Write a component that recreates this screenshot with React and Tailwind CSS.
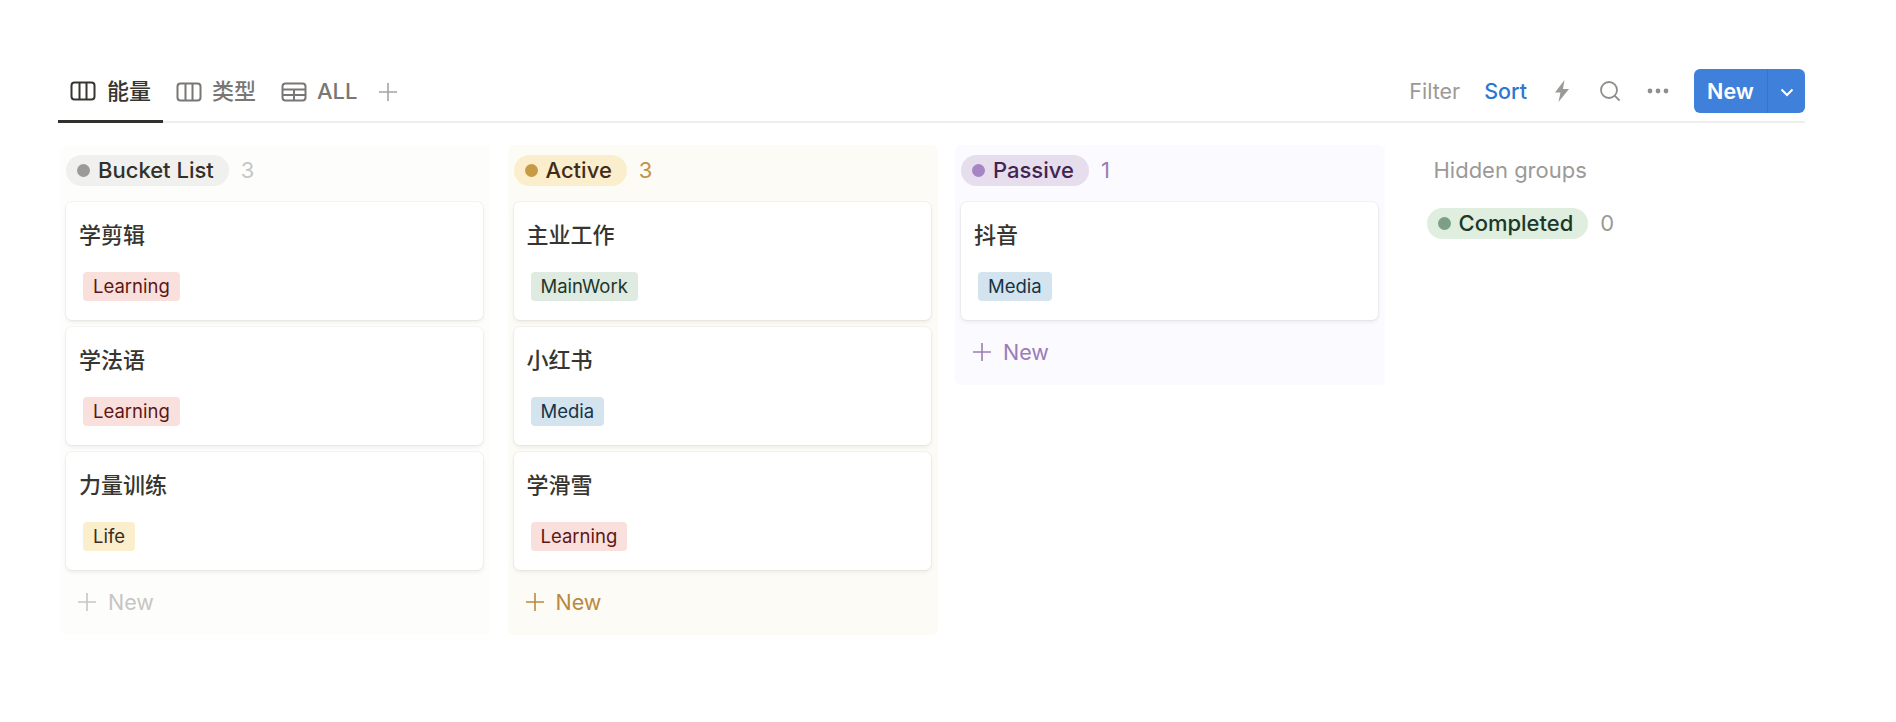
import { Search } from "lucide-react";

const font = "font-['Inter','Noto_Sans_CJK_SC',sans-serif]";

function BoardIcon({ className }) {
    return (
        <svg width="26" height="20" viewBox="0 0 26 20" fill="none" stroke="currentColor" strokeWidth="2" className={className}>
            <rect x="1.5" y="1.5" width="23" height="17" rx="3" />
            <path d="M9.5 1.5v17M16.5 1.5v17" />
        </svg>
    );
}

function TableIcon({ className }) {
    return (
        <svg width="26" height="20" viewBox="0 0 26 20" fill="none" stroke="currentColor" strokeWidth="2" className={className}>
            <rect x="1.5" y="1.5" width="23" height="17" rx="3" />
            <path d="M1.5 7.5h23M1.5 13h23M13 7.5v11" />
        </svg>
    );
}

function Plus({ className }) {
    return (
        <svg width="20" height="20" viewBox="0 0 20 20" fill="none" stroke="currentColor" strokeWidth="1.6" className={className}>
            <path d="M10 1v18M1 10h18" />
        </svg>
    );
}

function Tag({ label }) {
    const colors = {
        Learning: "bg-[#f9e0dc] text-[#5d1715]",
        Media: "bg-[#d3e4ee] text-[#183347]",
        MainWork: "bg-[#dfeae0] text-[#1c3829]",
        Life: "bg-[#fbeecd] text-[#402c1b]",
    };
    return (
        <span className={`ml-[4px] inline-flex h-[29px] items-center self-start rounded-[4px] px-[10px] text-[18.5px] ${colors[label]}`}>
            {label}
        </span>
    );
}

function Card({ title, tag }) {
    return (
        <div className="flex h-[118px] flex-col rounded-[6px] bg-white px-[13px] pt-[18px] shadow-[0_0_0_1px_rgba(15,15,15,0.035),0_2px_4px_rgba(15,15,15,0.07)]">
            <div className="h-[30px] text-[22px] leading-[30px] font-medium text-[#37352f]">{title}</div>
            <div className="mt-[22px] flex">
                <Tag label={tag} />
            </div>
        </div>
    );
}

function GroupPill({ label, pillClass, dotClass, textClass }) {
    return (
        <div className={`flex h-[31px] items-center rounded-full pr-[15px] pl-[11px] ${pillClass}`}>
            <span className={`mr-[8px] h-[13px] w-[13px] rounded-full ${dotClass}`} />
            <span className={`text-[22px] leading-[31px] font-medium ${textClass}`}>{label}</span>
        </div>
    );
}

function Column({ col }) {
    return (
        <div className={`w-[430px] rounded-[6px] pt-[10px] pr-[7px] pb-[16px] pl-[6px] ${col.bg}`}>
            <div className="mb-[16px] flex h-[31px] items-center gap-[12px]">
                <GroupPill label={col.name} pillClass={col.pill} dotClass={col.dot} textClass={col.text} />
                <span className={`text-[22px] leading-[31px] ${col.count}`}>{col.cards.length}</span>
            </div>
            <div className="flex flex-col gap-[7px]">
                {col.cards.map((card) => (
                    <Card key={card.title} title={card.title} tag={card.tag} />
                ))}
            </div>
            <div className={`mt-[15px] flex h-[34px] items-center gap-[11px] pl-[11px] text-[21.5px] ${col.add}`}>
                <Plus />
                <span>New</span>
            </div>
        </div>
    );
}

const columns = [
    {
        name: "Bucket List",
        bg: "bg-[#fdfdfb]",
        pill: "bg-[#f0f0ee]",
        dot: "bg-[#9b9a97]",
        text: "text-[#32302c]",
        count: "text-[#c7c6c4]",
        add: "text-[#c7c6c4]",
        cards: [
            { title: "学剪辑", tag: "Learning" },
            { title: "学法语", tag: "Learning" },
            { title: "力量训练", tag: "Life" },
        ],
    },
    {
        name: "Active",
        bg: "bg-[#fdfbf5]",
        pill: "bg-[#fbeecd]",
        dot: "bg-[#c99a45]",
        text: "text-[#402c1b]",
        count: "text-[#c3924a]",
        add: "text-[#b98a3e]",
        cards: [
            { title: "主业工作", tag: "MainWork" },
            { title: "小红书", tag: "Media" },
            { title: "学滑雪", tag: "Learning" },
        ],
    },
    {
        name: "Passive",
        bg: "bg-[#fbfafe]",
        pill: "bg-[#e6deed]",
        dot: "bg-[#a585c4]",
        text: "text-[#412454]",
        count: "text-[#9a7db8]",
        add: "text-[#9a7db8]",
        cards: [{ title: "抖音", tag: "Media" }],
    },
];

export default function App() {
    return (
        <div className={`h-[722px] w-[1896px] overflow-hidden bg-white pt-[60px] pr-[91px] pl-[58px] ${font}`}>
            <div className="flex h-[63px] items-stretch justify-between border-b-2 border-[#eeeeec]">
                <div className="flex items-stretch">
                    <div className="-mb-[2px] flex w-[105px] items-center gap-[11px] border-b-[3px] border-[#32302c] pt-[2px] pl-[12px] text-[22px] font-medium text-[#37352f]">
                        <BoardIcon />
                        <span>能量</span>
                    </div>
                    <div className="ml-[13px] flex items-center gap-[10px] pt-[2px] text-[22px] font-medium text-[#787774]">
                        <BoardIcon />
                        <span>类型</span>
                    </div>
                    <div className="ml-[25px] flex items-center gap-[10px] pt-[2px] text-[22px] font-medium text-[#787774]">
                        <TableIcon />
                        <span>ALL</span>
                    </div>
                    <div className="ml-[20px] flex items-center pt-[2px] text-[#a5a4a1]">
                        <Plus />
                    </div>
                </div>
                <div className="flex items-center text-[21.5px]">
                    <span className="pt-[2px] text-[#9b9a97]">Filter</span>
                    <span className="ml-[24px] pt-[2px] font-medium text-[#2f76d2]">Sort</span>
                    <svg width="16" height="22" viewBox="0 0 16 22" fill="#9b9a97" className="ml-[27px] mt-[1px]">
                        <path d="M10.5 0 1 12.5h5.5L4.5 22 15 9H9z" />
                    </svg>
                    <Search size={24} strokeWidth={1.8} className="ml-[28px] mt-[1px] text-[#8f8e8b]" />
                    <svg width="22" height="6" viewBox="0 0 22 6" fill="#8f8e8b" className="ml-[25px] mt-[1px]">
                        <circle cx="3" cy="3" r="2.4" />
                        <circle cx="11" cy="3" r="2.4" />
                        <circle cx="19" cy="3" r="2.4" />
                    </svg>
                    <div className="ml-[25px] flex h-[44px] w-[111px] items-stretch rounded-[6px] bg-[#3f80da] text-white">
                        <div className="flex w-[73px] items-center justify-center pt-[1px] font-semibold">New</div>
                        <div className="flex flex-1 items-center justify-center border-l border-[#3a74c4] pt-[3px]">
                            <svg width="14" height="9" viewBox="0 0 14 9" fill="none" stroke="currentColor" strokeWidth="2">
                                <path d="M1.5 1.5 7 7l5.5-5.5" />
                            </svg>
                        </div>
                    </div>
                </div>
            </div>
            <div className="mt-[22px] flex items-start gap-[17.5px] pl-[2px]">
                {columns.map((col) => (
                    <Column key={col.name} col={col} />
                ))}
                <div className="ml-[24px] flex flex-col items-start pt-[10px]">
                    <div className="h-[31px] pl-[7px] text-[22px] leading-[31px] text-[#9b9a97]">Hidden groups</div>
                    <div className="mt-[22px] flex items-center gap-[12px]">
                        <GroupPill
                            label="Completed"
                            pillClass="bg-[#dfeedf]"
                            dotClass="bg-[#7d9f85]"
                            textClass="text-[#1c3829]"
                        />
                        <span className="text-[22px] leading-[31px] text-[#9b9a97]">0</span>
                    </div>
                </div>
            </div>
        </div>
    );
}
